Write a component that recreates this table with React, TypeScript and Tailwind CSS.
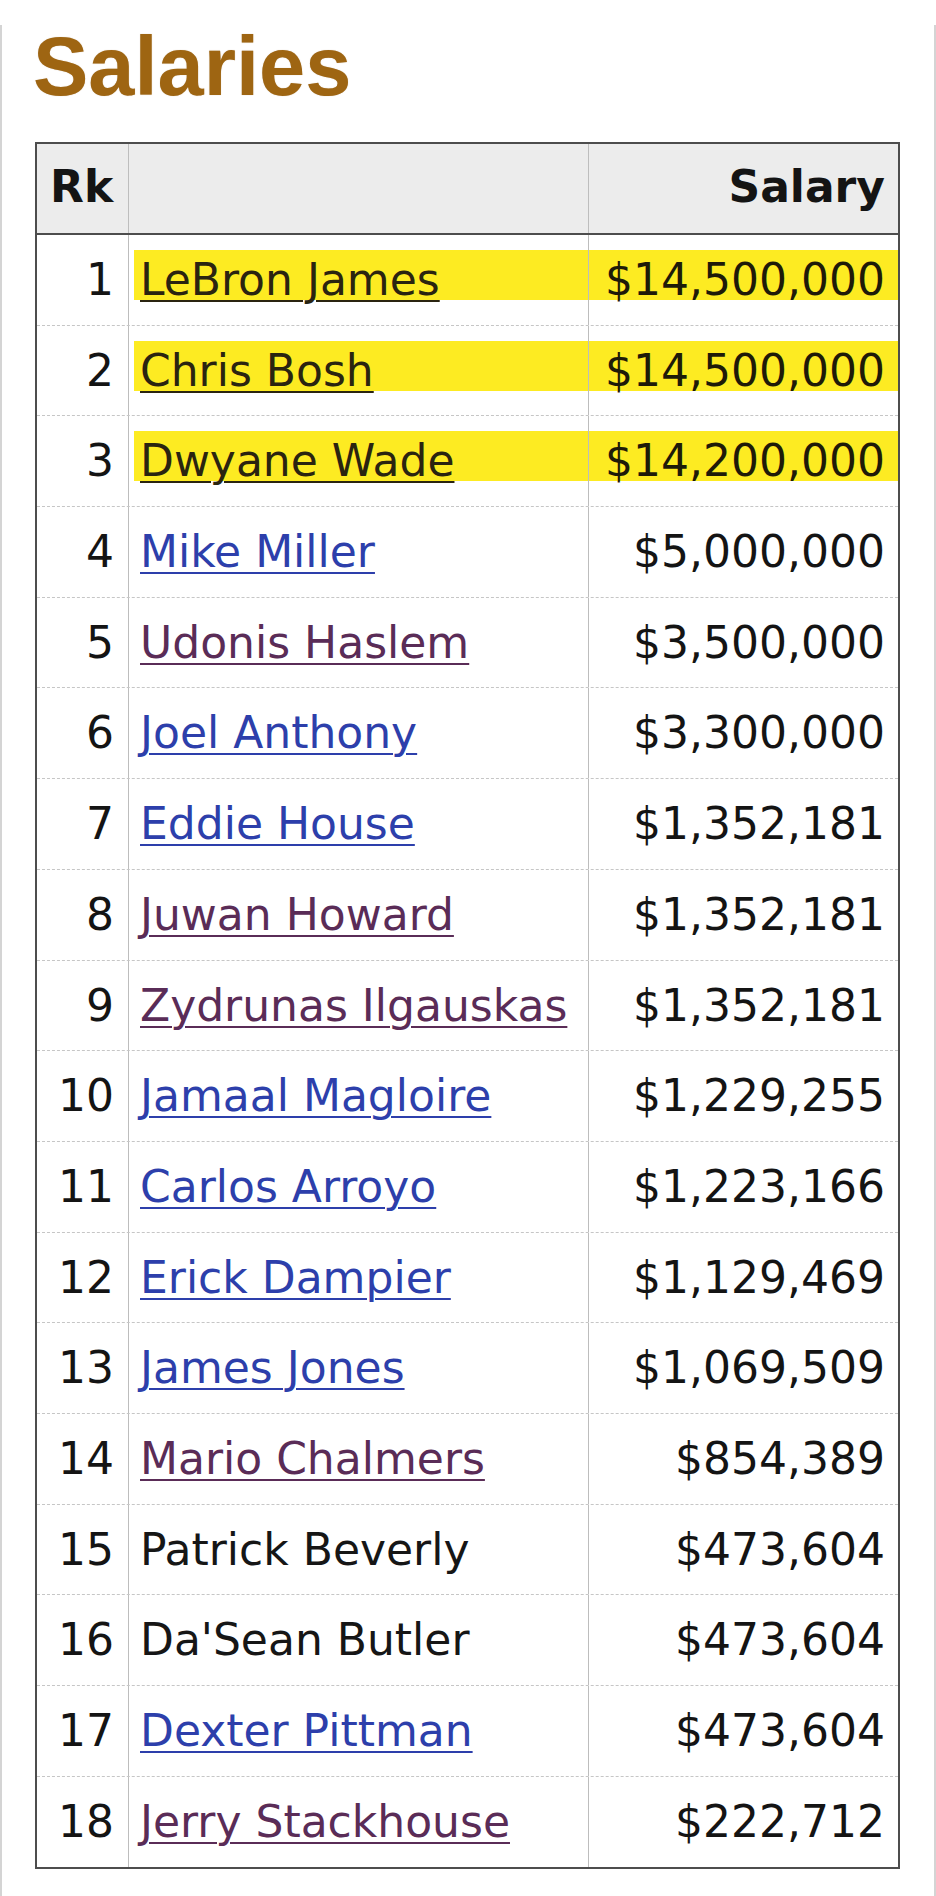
import React from "react";

type Row = { rk: number; name: string; salary: string; kind: "hl" | "blue" | "purple" | "plain" };

const rows: Row[] = [
  { rk: 1, name: "LeBron James", salary: "$14,500,000", kind: "hl" },
  { rk: 2, name: "Chris Bosh", salary: "$14,500,000", kind: "hl" },
  { rk: 3, name: "Dwyane Wade", salary: "$14,200,000", kind: "hl" },
  { rk: 4, name: "Mike Miller", salary: "$5,000,000", kind: "blue" },
  { rk: 5, name: "Udonis Haslem", salary: "$3,500,000", kind: "purple" },
  { rk: 6, name: "Joel Anthony", salary: "$3,300,000", kind: "blue" },
  { rk: 7, name: "Eddie House", salary: "$1,352,181", kind: "blue" },
  { rk: 8, name: "Juwan Howard", salary: "$1,352,181", kind: "purple" },
  { rk: 9, name: "Zydrunas Ilgauskas", salary: "$1,352,181", kind: "purple" },
  { rk: 10, name: "Jamaal Magloire", salary: "$1,229,255", kind: "blue" },
  { rk: 11, name: "Carlos Arroyo", salary: "$1,223,166", kind: "blue" },
  { rk: 12, name: "Erick Dampier", salary: "$1,129,469", kind: "blue" },
  { rk: 13, name: "James Jones", salary: "$1,069,509", kind: "blue" },
  { rk: 14, name: "Mario Chalmers", salary: "$854,389", kind: "purple" },
  { rk: 15, name: "Patrick Beverly", salary: "$473,604", kind: "plain" },
  { rk: 16, name: "Da'Sean Butler", salary: "$473,604", kind: "plain" },
  { rk: 17, name: "Dexter Pittman", salary: "$473,604", kind: "blue" },
  { rk: 18, name: "Jerry Stackhouse", salary: "$222,712", kind: "purple" },
];

function NameText({ row }: { row: Row }) {
  if (row.kind === "plain") {
    return <span className="text-[#161616]">{row.name}</span>;
  }
  const color =
    row.kind === "hl"
      ? "text-[#2a2410] decoration-[#2a2410]"
      : row.kind === "blue"
      ? "text-[#2d3fab] decoration-[#2d3fab]"
      : "text-[#5a2c57] decoration-[#5a2c57]";
  return (
    <a href="#" className={`${color} underline decoration-2 underline-offset-[5px]`}>
      {row.name}
    </a>
  );
}

export default function App() {
  return (
    <div className="h-[1896px] w-[936px] border-x-2 border-[#d4d4d4] bg-white pl-[31px] font-['DejaVu_Sans',sans-serif]">
      <h1 className="mt-[25px] font-['Liberation_Sans',Arial,sans-serif] text-[83px] font-bold leading-[83px] text-[#9e6512] [text-shadow:0_0_1px_rgba(120,70,0,0.35)]">
        Salaries
      </h1>

      <div className="ml-[2px] mt-[34px] w-[865px] border-2 border-[#4d4d4d] text-[44px] text-[#141414]">
        {/* header */}
        <div className="flex h-[91px] border-b-2 border-[#4d4d4d] bg-[#ececec] font-bold">
          <div className="w-[92px] shrink-0 border-r border-[#bdbdbd] pl-[13px] pt-[18px] leading-[50px]">
            Rk
          </div>
          <div className="w-[460px] shrink-0 border-r border-[#bdbdbd]" />
          <div className="flex-1 pr-[13px] pt-[18px] text-right leading-[50px]">Salary</div>
        </div>

        {rows.map((row, i) => {
          const hl = row.kind === "hl";
          return (
            <div
              key={row.rk}
              className={`flex h-[90.7px] ${
                i < rows.length - 1 ? "border-b border-dashed border-[#c6c6c6]" : ""
              }`}
            >
              <div className="w-[92px] shrink-0 border-r border-[#bdbdbd] pr-[14px] pt-[20px] text-right leading-[50px]">
                {row.rk}
              </div>
              <div className="w-[460px] shrink-0 border-r border-[#bdbdbd] pt-[15px]">
                <div
                  className={`ml-[5px] h-[50px] whitespace-nowrap pl-[6px] pt-[5px] leading-[50px] ${
                    hl ? "bg-[#fdeb22]" : ""
                  }`}
                >
                  <NameText row={row} />
                </div>
              </div>
              <div className="flex-1 pt-[15px]">
                <div
                  className={`h-[50px] pr-[13px] pt-[5px] text-right leading-[50px] ${
                    hl ? "bg-[#fdeb22] text-[#1e1a08]" : ""
                  }`}
                >
                  {row.salary}
                </div>
              </div>
            </div>
          );
        })}
      </div>
    </div>
  );
}
